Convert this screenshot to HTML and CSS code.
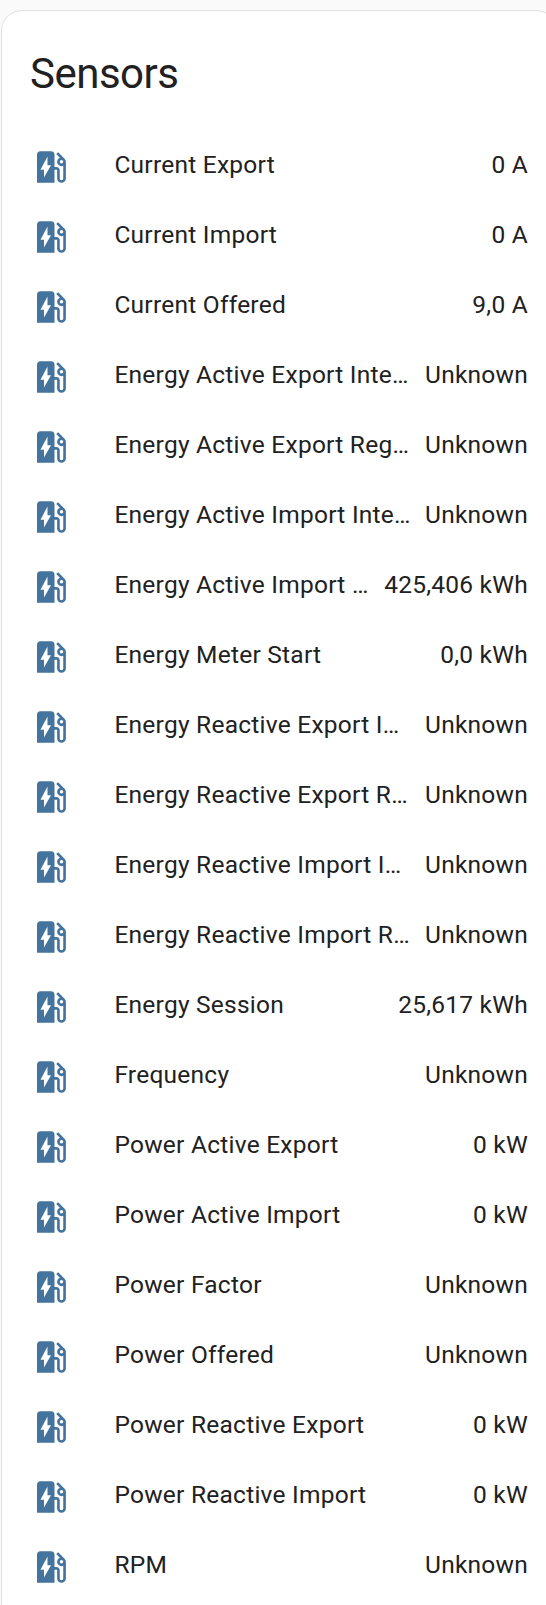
FILE: index.html
```
<!DOCTYPE html>
<html lang="en">
<head>
    <meta charset="UTF-8">
    <meta name="viewport" content="width=device-width, initial-scale=1.0">
    <title>Sensors</title>
    <link rel="stylesheet" href="styles.css">
</head>
<body>
    <svg class="sprite" aria-hidden="true">
        <symbol id="ev-station" viewBox="0 0 24 24">
            <path d="M19.77,7.23L19.78,7.22L16.06,3.5L15,4.56L17.11,6.67C16.17,7.03 15.5,7.93 15.5,9A2.5,2.5 0 0,0 18,11.5C18.36,11.5 18.69,11.42 19,11.29V18.5A1,1 0 0,1 18,19.5A1,1 0 0,1 17,18.5V14A2,2 0 0,0 15,12H14V5A2,2 0 0,0 12,3H6A2,2 0 0,0 4,5V21H14V13.5H15.5V18.5A2.5,2.5 0 0,0 18,21A2.5,2.5 0 0,0 20.5,18.5V9C20.5,8.31 20.22,7.68 19.77,7.23M18,10A1,1 0 0,1 17,9A1,1 0 0,1 18,8A1,1 0 0,1 19,9A1,1 0 0,1 18,10M8,18V13.5H6L10,6V11H12L8,18Z"/>
        </symbol>
    </svg>

    <main class="card">
        <h1 class="card-header">Sensors</h1>
        <div id="sensors"></div>
    </main>

    <script src="script.js"></script>
</body>
</html>
```

FILE: styles.css
```
body {
    display: flex;
    margin: 0;
    height: 1605px;
    overflow: hidden;
    background-color: #fafafa;
    color: #212121;
    font-family: Roboto, sans-serif;
}

.sprite {
    display: none;
}

.card {
    box-sizing: border-box;
    flex: none;
    width: 556px;
    margin: 10px 0 0 1px;
    padding: 0 28px;
    background-color: #fff;
    border: 1px solid #e0e0e0;
    border-bottom: none;
    border-radius: 21px 21px 0 0;
}

.card-header {
    margin: 0;
    padding: 21px 0 16px;
    font-size: 42px;
    font-weight: 400;
    line-height: 84px;
    letter-spacing: -0.012em;
}

.row {
    display: flex;
    align-items: center;
    height: 70px;
    font-size: 24.5px;
    line-height: 35px;
    letter-spacing: 0.01em;
}

.icon {
    flex: none;
    width: 42px;
    height: 42px;
    fill: #44739e;
}

.name {
    flex: 1;
    min-width: 0;
    margin: 0 13px 6px 42.4px;
    overflow: hidden;
    white-space: nowrap;
    text-overflow: ellipsis;
}

.value {
    flex: none;
    margin-bottom: 6px;
    white-space: nowrap;
}
```

FILE: script.js
```
const sensors = [
    ['Current Export', '0 A'],
    ['Current Import', '0 A'],
    ['Current Offered', '9,0 A'],
    ['Energy Active Export Interval', 'Unknown'],
    ['Energy Active Export Register', 'Unknown'],
    ['Energy Active Import Interval', 'Unknown'],
    ['Energy Active Import Register', '425,406 kWh'],
    ['Energy Meter Start', '0,0 kWh'],
    ['Energy Reactive Export Interval', 'Unknown'],
    ['Energy Reactive Export Register', 'Unknown'],
    ['Energy Reactive Import Interval', 'Unknown'],
    ['Energy Reactive Import Register', 'Unknown'],
    ['Energy Session', '25,617 kWh'],
    ['Frequency', 'Unknown'],
    ['Power Active Export', '0 kW'],
    ['Power Active Import', '0 kW'],
    ['Power Factor', 'Unknown'],
    ['Power Offered', 'Unknown'],
    ['Power Reactive Export', '0 kW'],
    ['Power Reactive Import', '0 kW'],
    ['RPM', 'Unknown'],
];

document.getElementById('sensors').innerHTML = sensors.map(([name, value]) => `
    <div class="row">
        <svg class="icon"><use href="#ev-station"/></svg>
        <div class="name">${name}</div>
        <div class="value">${value}</div>
    </div>
`).join('');
```
